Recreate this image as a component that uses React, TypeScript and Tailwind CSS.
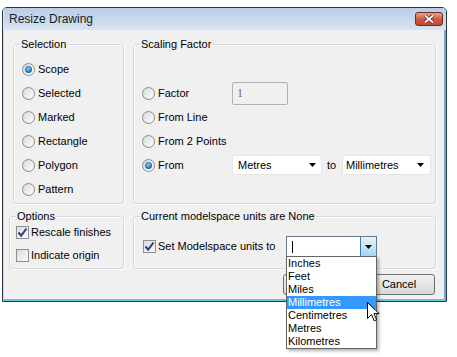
import React from "react";

function Radio({ checked }: { checked?: boolean }) {
  return (
    <span className="w-[13px] h-[13px] rounded-full border border-[#8a8c8e] bg-gradient-to-br from-[#d9d9d9] to-[#ffffff] flex items-center justify-center shrink-0">
      {checked && (
        <span className="w-[7px] h-[7px] rounded-full bg-[radial-gradient(circle_at_45%_40%,#8fd4fb_0%,#2f8ac6_45%,#0b3f6e_100%)]" />
      )}
    </span>
  );
}

function Check({ checked }: { checked?: boolean }) {
  return (
    <span className="w-[13px] h-[13px] border border-[#8f8f8f] bg-gradient-to-br from-[#dcdcdc] to-[#fbfbfb] flex items-center justify-center shrink-0">
      {checked && (
        <svg width="11" height="11" viewBox="0 0 11 11">
          <path d="M1.5 5.5 L4.2 8.6 L9.5 1.5" fill="none" stroke="#2b3b92" strokeWidth="2" />
        </svg>
      )}
    </span>
  );
}

function Arrow() {
  return (
    <svg width="7" height="4" viewBox="0 0 7 4">
      <polygon points="0,0 7,0 3.5,4" fill="#000" />
    </svg>
  );
}

function GroupBox({
  label,
  className,
  children,
}: {
  label: string;
  className: string;
  children?: React.ReactNode;
}) {
  return (
    <div
      className={
        "relative border border-[#d5d9dd] rounded-[3px] shadow-[inset_1px_1px_0_#ffffff,1px_1px_0_#ffffff] " +
        className
      }
    >
      <span className="absolute top-[-7px] left-[6px] px-[1px] bg-[#f0f0f0] leading-[13px]">
        {label}
      </span>
      {children}
    </div>
  );
}

export default function App() {
  const selection = ["Scope", "Selected", "Marked", "Rectangle", "Polygon", "Pattern"];
  const units = ["Inches", "Feet", "Miles", "Millimetres", "Centimetres", "Metres", "Kilometres"];

  return (
    <div className="relative w-[457px] h-[357px] bg-white overflow-hidden pt-[7px] pl-[2px] font-['Liberation_Sans',Arial,sans-serif] text-[11px] leading-[13px] text-black">
      {/* window */}
      <div className="w-[445px] h-[295px] border border-[#2a3744] rounded-t-[5px] flex flex-col">
        {/* title bar */}
        <div className="h-[22px] shrink-0 flex items-center justify-between pl-[5px] pr-[3px] rounded-t-[4px] bg-gradient-to-b from-[#b8cde6] to-[#d7e4f2] border-l border-[#dfeaf6]">
          <span className="text-[12px] text-[#1b1b1b]">Resize Drawing</span>
          <div className="w-[28px] h-[14px] rounded-[3px] border border-[#6e2a1c] bg-gradient-to-b from-[#e7a391] via-[#cf5a40] to-[#c24a2f] flex items-center justify-center">
            <svg width="12" height="10" viewBox="0 0 12 10">
              <path d="M2 1.5 L10 8.5 M10 1.5 L2 8.5" stroke="#5a2418" strokeWidth="3.4" />
              <path d="M2 1.5 L10 8.5 M10 1.5 L2 8.5" stroke="#ffffff" strokeWidth="1.8" />
            </svg>
          </div>
        </div>

        {/* client */}
        <div className="flex-1 bg-[#f0f0f0] border-l border-r-2 border-b-2 border-l-[#c4d9ee] border-r-[#6fa9d6] border-b-[#5cc6e6] flex flex-col">
          <div className="mt-[14px] flex">
            <GroupBox label="Selection" className="ml-[9px] w-[111px] h-[160px]">
              <div className="pt-[12px] pl-[8px] flex flex-col">
                {selection.map((s, i) => (
                  <div key={s} className="h-[24px] flex items-center gap-[3px]">
                    <Radio checked={i === 0} />
                    <span>{s}</span>
                  </div>
                ))}
              </div>
            </GroupBox>

            <GroupBox label="Scaling Factor" className="ml-[9px] w-[303px] h-[160px]">
              <div className="pt-[36px] pl-[8px] flex flex-col">
                <div className="h-[24px] flex items-center">
                  <div className="w-[90px] flex items-center gap-[3px]">
                    <Radio />
                    <span>Factor</span>
                  </div>
                  <div className="w-[56px] h-[23px] border border-[#b1b1b1] rounded-[2px] bg-[#f0f0f0] flex items-center pl-[4px] font-['Liberation_Serif',serif] text-[12px] text-[#6d6d6d]">
                    1
                  </div>
                </div>
                <div className="h-[24px] flex items-center gap-[3px]">
                  <Radio />
                  <span>From Line</span>
                </div>
                <div className="h-[24px] flex items-center gap-[3px]">
                  <Radio />
                  <span>From 2 Points</span>
                </div>
                <div className="h-[24px] flex items-center">
                  <div className="w-[90px] flex items-center gap-[3px]">
                    <Radio checked />
                    <span>From</span>
                  </div>
                  <div className="w-[90px] h-[20px] bg-white border border-[#e6e6e6] flex items-center justify-between pl-[5px] pr-[5px]">
                    <span>Metres</span>
                    <Arrow />
                  </div>
                  <span className="ml-[5px] w-[10px]">to</span>
                  <div className="ml-[5px] w-[89px] h-[20px] bg-white border border-[#e6e6e6] flex items-center justify-between pl-[3px] pr-[6px]">
                    <span>Millimetres</span>
                    <Arrow />
                  </div>
                </div>
              </div>
            </GroupBox>
          </div>

          <div className="mt-[12px] flex">
            <GroupBox label="Options" className="ml-[5px] w-[115px] h-[53px]">
              <div className="pt-[4px] pl-[6px] flex flex-col">
                <div className="h-[23px] flex items-center gap-[2px]">
                  <Check checked />
                  <span>Rescale finishes</span>
                </div>
                <div className="h-[23px] flex items-center gap-[2px]">
                  <Check />
                  <span>Indicate origin</span>
                </div>
              </div>
            </GroupBox>

            <GroupBox label="Current modelspace units are None" className="ml-[9px] w-[303px] h-[53px]">
              <div className="pt-[19px] pl-[9px] flex items-center">
                <div className="w-[143px] h-[21px] flex items-center gap-[2px]">
                  <Check checked />
                  <span>Set Modelspace units to</span>
                </div>
                <div className="w-[91px] h-[21px] bg-white border border-[#6b7886] flex items-center justify-between">
                  <span className="ml-[5px] w-[1px] h-[12px] bg-black" />
                  <div className="w-[16px] h-[19px] border-l border-[#3c7fb1] bg-gradient-to-b from-[#e5f4fc] to-[#a7d5f3] flex items-center justify-center">
                    <Arrow />
                  </div>
                </div>
              </div>
            </GroupBox>
          </div>

          <div className="mt-[5px] flex justify-end pr-[9px] gap-[2px]">
            <button className="w-[75px] h-[21px] rounded-[3px] border border-[#707070] bg-gradient-to-b from-[#f2f2f2] to-[#d9d9d9]">
              OK
            </button>
            <button className="w-[75px] h-[21px] rounded-[3px] border border-[#707070] bg-gradient-to-b from-[#f2f2f2] to-[#d9d9d9] pl-[3px]">
              Cancel
            </button>
          </div>
        </div>
      </div>

      {/* open dropdown list */}
      <div className="absolute left-[286px] top-[256px] w-[91px] h-[93px] bg-white border border-[#646464] shadow-[2px_2px_3px_rgba(0,0,0,0.3)] flex flex-col">
        {units.map((u) => (
          <div
            key={u}
            className={
              "h-[13px] leading-[13px] pl-[1px] " +
              (u === "Millimetres" ? "bg-[#3399ff] text-white" : "")
            }
          >
            {u}
          </div>
        ))}
      </div>

      {/* mouse cursor */}
      <svg className="absolute left-[367px] top-[302px]" width="13" height="21" viewBox="0 0 13 21">
        <path
          d="M0.5 0.5 L0.5 16.5 L4.5 12.5 L7.2 18.8 L9.6 17.8 L7 11.6 L12.2 11.6 Z"
          fill="#ffffff"
          stroke="#000000"
          strokeWidth="1"
        />
      </svg>
    </div>
  );
}
